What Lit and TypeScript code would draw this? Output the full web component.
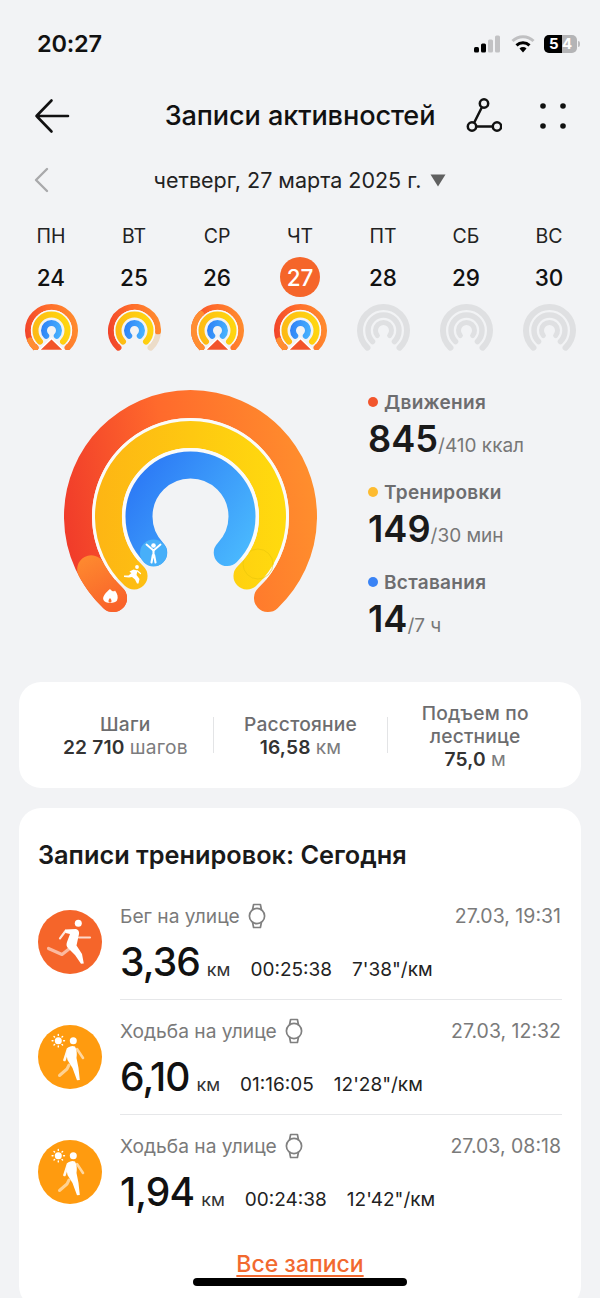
import { LitElement, html, css, svg } from "lit";
import { customElement, property } from "lit/decorators.js";

const pt = (cx: number, cy: number, r: number, a: number) => {
  // a: degrees clockwise from straight down
  const t = (a * Math.PI) / 180;
  return [cx - r * Math.sin(t), cy + r * Math.cos(t)];
};
const arc = (cx: number, cy: number, r: number, a0: number, a1: number) => {
  const [x0, y0] = pt(cx, cy, r, a0);
  const [x1, y1] = pt(cx, cy, r, a1);
  const large = a1 - a0 > 180 ? 1 : 0;
  return `M${x0.toFixed(2)} ${y0.toFixed(2)}A${r} ${r} 0 ${large} 1 ${x1.toFixed(2)} ${y1.toFixed(2)}`;
};

type Day = { w: string; n: string; kind: string };
const days: Day[] = [
  { w: "ПН", n: "24", kind: "a" },
  { w: "ВТ", n: "25", kind: "b" },
  { w: "СР", n: "26", kind: "c" },
  { w: "ЧТ", n: "27", kind: "d" },
  { w: "ПТ", n: "28", kind: "g" },
  { w: "СБ", n: "29", kind: "g" },
  { w: "ВС", n: "30", kind: "g" },
];

@customElement("mini-ring")
class MiniRing extends LitElement {
  @property() kind = "g";
  static styles = css`
    :host { display: block; width: 53px; height: 47px; }
    svg { display: block; }
  `;
  render() {
    const c = 26.5, A = 43, B = 317;
    if (this.kind === "g") {
      return html`<svg width="53" height="47" viewBox="0 0 53 47" fill="none" stroke="#dfe0e2" stroke-linecap="round">
        <path d=${arc(c, c, 23.5, A, B)} stroke-width="6" />
        <path d=${arc(c, c, 15.5, A + 2, B - 2)} stroke-width="5.5" />
        <path d=${arc(c, c, 8, 50, 310)} stroke-width="5" />
      </svg>`;
    }
    const k = this.kind;
    return html`<svg width="53" height="47" viewBox="0 0 53 47" fill="none" stroke-linecap="round">
      <defs>
        <linearGradient id="o" gradientUnits="userSpaceOnUse" x1="0" y1="30" x2="53" y2="20"><stop offset="0" stop-color="#f1432a"/><stop offset=".5" stop-color="#ff6c2c"/><stop offset="1" stop-color="#ff8c2e"/></linearGradient>
        <linearGradient id="y" gradientUnits="userSpaceOnUse" x1="6" y1="30" x2="47" y2="20"><stop offset="0" stop-color="#fdb714"/><stop offset="1" stop-color="#ffd90f"/></linearGradient>
        <linearGradient id="b" gradientUnits="userSpaceOnUse" x1="14" y1="24" x2="40" y2="30"><stop offset="0" stop-color="#2b7cf6"/><stop offset="1" stop-color="#4dbcff"/></linearGradient>
      </defs>
      ${k === "b"
        ? svg`<path d=${arc(c, c, 23.5, 270, B)} stroke="#ecdcc8" stroke-width="6"/>`
        : ""}
      <path d=${arc(c, c, 23.5, A, k === "b" ? 272 : B)} stroke="url(#o)" stroke-width="6" />
      ${k === "c" || k === "d" || k === "a"
        ? svg`<path d=${arc(c, c, 23.5, A, k === "c" ? 135 : 65)} stroke="#ff8d31" stroke-width="6"/>`
        : ""}
      <path d=${arc(c, c, 20.2, 48, 312)} stroke="#fdfdfd" stroke-width="1" stroke-linecap="butt"/>
      <path d=${arc(c, c, 16, A + 3, B - 3)} stroke="url(#y)" stroke-width="6" />
      <path d=${arc(c, c, 7.5, 45, 315)} stroke="url(#b)" stroke-width="6" />
      ${k !== "b"
        ? svg`<path d="M26.5 34.5L39 46.5H14Z" fill="#f2542b" stroke="#fff" stroke-width="1.5" stroke-linejoin="miter"/>
        <rect x="9" y="46" width="36" height="2" fill="#f2f3f5" stroke="none"/>`
        : ""}
    </svg>`;
  }
}

const runner = (c = "#fff") => svg`
  <circle cx="40.3" cy="13.3" r="3.5" fill="${c}"/>
  <path d="M27 19.5L38 19Q41.5 20 41 24L38.5 35.5L44 44L45.8 53.5L43 53.8L37 45L30.5 38.5Q27.5 36 29 32L32 24L27.5 23Z" fill="${c}"/>
  <path d="M27.5 21L22 28.3" stroke="${c}" stroke-width="2.2" stroke-linecap="round" opacity=".85" fill="none"/>
  <path d="M41 27.5H52" stroke="${c}" stroke-width="2.2" stroke-linecap="round" opacity=".75" fill="none"/>
  <path d="M31 39L24 44.5L10.5 38.5" fill="none" stroke="${c}" stroke-width="3.2" stroke-linecap="round" stroke-linejoin="round" opacity=".55"/>
`;

const walker = (c = "#fff") => svg`
  <circle cx="35.3" cy="15.7" r="3.5" fill="${c}"/>
  <path d="M30 22.5Q33.5 20 37 21.5Q39.5 26 38.5 33L40.5 43L41.8 55L39 55.3L34.5 43L29.5 35Q28 28 30 22.5Z" fill="${c}"/>
  <path d="M30 24L26.5 35" stroke="${c}" stroke-width="2.6" stroke-linecap="round" opacity=".95"/>
  <path d="M39 24L45 33" stroke="${c}" stroke-width="2.6" stroke-linecap="round" opacity=".6"/>
  <path d="M31 40L29 44L21.5 50.5" fill="none" stroke="${c}" stroke-width="3" stroke-linecap="round" stroke-linejoin="round" opacity=".55"/>
  <circle cx="20.3" cy="15.7" r="3.5" fill="${c}"/>
  <path d="M20.3 9.5V10.4M20.3 21V21.9M14.1 15.7H15M25.6 15.7H26.5M16 11.4L16.6 12M24 19.4L24.6 20M16 20L16.6 19.4M24 12L24.6 11.4" stroke="${c}" stroke-width="1.4" stroke-linecap="round"/>
`;

const watch = svg`<svg width="18" height="26" viewBox="0 0 18 26" fill="none" stroke="#808080" stroke-width="1.7" stroke-linejoin="round">
  <circle cx="9" cy="13" r="7.6"/>
  <path d="M4.5 7L5.6 1.5H12.4L13.5 7M4.5 19L5.6 24.5H12.4L13.5 19"/>
</svg>`;

const workouts = [
  { t: "Бег на улице", d: "27.03, 19:31", dist: "3,36", time: "00:25:38", pace: "7'38\"/км", run: true },
  { t: "Ходьба на улице", d: "27.03, 12:32", dist: "6,10", time: "01:16:05", pace: "12'28\"/км", run: false },
  { t: "Ходьба на улице", d: "27.03, 08:18", dist: "1,94", time: "00:24:38", pace: "12'42\"/км", run: false },
];

const stats = [
  { l: "Движения", c: "#f2552c", v: "845", u: "/410 ккал" },
  { l: "Тренировки", c: "#fdbb30", v: "149", u: "/30 мин" },
  { l: "Вставания", c: "#3a83f5", v: "14", u: "/7 ч" },
];

@customElement("app-root")
class AppRoot extends LitElement {
  static styles = css`
    :host {
      display: block; width: 600px; height: 1298px; overflow: hidden; position: relative;
      background: #f2f3f5; color: #111;
      font-family: Inter, "Noto Sans", sans-serif;
    }
    svg { display: block; }
    .status { height: 88px; display: flex; align-items: center; justify-content: space-between; padding: 0 20px 0 37px; }
    .time { font-size: 23.5px; font-weight: 600; letter-spacing: -0.2px; padding-bottom: 2px; }
    .sys { display: flex; align-items: center; gap: 9px; }
    .bwrap { display: flex; align-items: center; gap: 1px; }
    .batt { width: 33px; height: 18px; border-radius: 5px; display: flex; overflow: hidden; font-size: 15px; font-weight: 700; color: #fff; line-height: 18px; background: #b4b4b6; }
    .batt b { width: 18px; background: #000; padding-left: 5px; box-sizing: border-box; font-weight: 700; }
    .batt i { font-style: normal; }
    .nub { width: 2px; height: 6px; border-radius: 0 2px 2px 0; background: #bdbdbf; }
    .nav { height: 56px; display: grid; grid-template-columns: 1fr auto 1fr; align-items: center; padding: 0 34px; }
    .title { font-size: 27.1px; font-weight: 500; letter-spacing: -0.1px; white-space: nowrap; padding-bottom: 2px; }
    .nav-r { display: flex; justify-content: flex-end; align-items: center; gap: 38px; }
    .date { height: 72px; display: grid; grid-template-columns: 1fr auto 1fr; align-items: center; padding: 0 34px; }
    .date-m { display: flex; align-items: center; gap: 9px; font-size: 21.5px; color: #222; white-space: nowrap; }
    .week { display: grid; grid-template-columns: repeat(7, 83px); padding-left: 9.5px; }
    .day { display: flex; flex-direction: column; align-items: center; }
    .dw { height: 40px; line-height: 40px; font-size: 19.5px; color: #222; }
    .dn { width: 40px; height: 40px; margin: 1px 0 7px; border-radius: 50%; display: flex; align-items: center; justify-content: center; font-size: 22.5px; font-weight: 500; }
    .dn.on { background: #f5652a; color: #fff; }
    .rings { display: flex; padding: 29px 0 0 50px; height: 302px; gap: 38px; }
    .stats { display: flex; flex-direction: column; padding-top: 10px; }
    .stat { height: 90px; }
    .sl { display: flex; align-items: center; gap: 6px; height: 24px; font-size: 19px; font-weight: 600; color: #6d6d6f; letter-spacing: 0.3px; }
    .sd { width: 10px; height: 10px; border-radius: 50%; }
    .sv { display: flex; align-items: baseline; margin-top: 3px; line-height: 44px; }
    .sv b { font-size: 36.2px; font-weight: 600; color: #1a1a1a; }
    .sv span { font-size: 19px; color: #777; }
    .card { background: #fff; border-radius: 22px; margin: 0 19px; }
    .metrics { height: 106px; display: grid; grid-template-columns: repeat(3, 1fr); padding: 0 19px; align-items: center; }
    .m { text-align: center; font-size: 19.2px; font-weight: 500; color: #6d6d6f; line-height: 23px; letter-spacing: 0.2px; padding-top: 2px; box-sizing: border-box; }
    .m + .m { border-left: 1px solid #e3e4e6; }
    .m.c { height: 36px; display: flex; flex-direction: column; justify-content: center; }
    .m strong { display: block; color: #333; font-weight: 600; }
    .m small { font-size: 19.2px; font-weight: 400; color: #7c7c7e; }
    .records { margin-top: 20px; height: 500px; padding: 0 19px; }
    .rt { height: 77px; display: flex; align-items: flex-end; padding-bottom: 15px; box-sizing: border-box; font-size: 25.3px; font-weight: 600; color: #1a1a1a; white-space: nowrap; }
    .row { height: 115px; display: grid; grid-template-columns: 82px 1fr; }
    .ic { width: 64px; height: 64px; border-radius: 50%; margin-top: 25px; }
    .ic.r { background: #f5652a; }
    .ic.w { background: #ff9b0f; }
    .rc { border-bottom: 1px solid #e6e7e9; height: 115px; box-sizing: border-box; }
    .row:last-of-type .rc { border-bottom: 0; }
    .l1 { display: flex; align-items: center; justify-content: space-between; height: 26px; margin-top: 18px; font-size: 19.2px; color: #7a7a7a; padding-right: 1px; }
    .l1 div { display: flex; align-items: center; gap: 8px; }
    .l1 span { font-size: 19.5px; }
    .l2 { display: flex; align-items: baseline; margin-top: 9px; gap: 20px; font-size: 19px; color: #222; white-space: nowrap; }
    .l2 .dist { font-size: 39px; font-weight: 500; color: #111; letter-spacing: -0.9px; }
    .l2 .km { font-size: 18px; color: #333; margin-left: 7px; }
    .l2 > div { display: flex; align-items: baseline; }
    .all { display: block; text-align: center; margin-top: 20px; line-height: 28px; font-size: 23px; font-weight: 500; color: #f2692f; text-decoration: underline; text-underline-offset: 3px; }
    .home { position: absolute; left: 193px; top: 1278px; width: 214px; height: 8px; border-radius: 4px; background: #000; }
  `;

  private mainRing() {
    const cx = 140.5, cy = 136.5;
    return html`<svg width="280" height="240" viewBox="0 0 280 240" fill="none" stroke-linecap="round">
      <defs>
        <linearGradient id="ro" gradientUnits="userSpaceOnUse" x1="14" y1="170" x2="267" y2="130"><stop offset="0" stop-color="#f03a2a"/><stop offset=".45" stop-color="#ff6a2c"/><stop offset="1" stop-color="#ff8e2d"/></linearGradient>
        <linearGradient id="ry" gradientUnits="userSpaceOnUse" x1="45" y1="150" x2="237" y2="150"><stop offset="0" stop-color="#fdb514"/><stop offset="1" stop-color="#ffdb0e"/></linearGradient>
        <linearGradient id="rb" gradientUnits="userSpaceOnUse" x1="75" y1="100" x2="205" y2="190"><stop offset="0" stop-color="#2b77f5"/><stop offset="1" stop-color="#4dc0ff"/></linearGradient>
        <linearGradient id="tip" gradientUnits="userSpaceOnUse" x1="40" y1="165" x2="70" y2="225"><stop offset="0" stop-color="#ff8f30"/><stop offset="1" stop-color="#f9632a"/></linearGradient>
      </defs>
      <path d=${arc(cx, cy, 112.5, 43.5, 316.5)} stroke="url(#ro)" stroke-width="28"/>
      <path d=${arc(cx, cy, 112.5, 43.5, 62)} stroke="url(#tip)" stroke-width="28"/>
      <path d=${arc(cx, cy, 97, 50, 310)} stroke="#fbfbf9" stroke-width="3" stroke-linecap="butt"/>
      <path d=${arc(cx, cy, 82, 43.5, 316.5)} stroke="url(#ry)" stroke-width="27"/>
      <circle cx="208" cy="184" r="15" fill="none" stroke="#e8c40c" stroke-width="1" opacity=".6"/>
      <path d=${arc(cx, cy, 66.8, 50, 310)} stroke="#fbfbf9" stroke-width="3.5" stroke-linecap="butt"/>
      <path d=${arc(cx, cy, 51.5, 45.5, 314.5)} stroke="url(#rb)" stroke-width="27"/>
      <circle cx="103.5" cy="173" r="13.5" fill="#47aff9"/>
      <g fill="none" stroke="#fff" stroke-linecap="round" stroke-linejoin="round">
        <circle cx="103.5" cy="165.5" r="2.3" fill="#fff" stroke="none"/>
        <path d="M96.5 164.5L103.5 170.5L110.5 164.5" stroke-width="1.9"/>
        <path d="M103.5 170V175M101.5 182.5L102.9 175H104.1L105.5 182.5" stroke-width="2.1"/>
      </g>
      <g fill="#fff">
        <circle cx="87" cy="187" r="1.9"/>
        <path d="M79.5 191.5L83.5 189.5L87.5 190.5L86.5 195L89.5 199L88.5 203.5L87 203.5L85 199.5L82 197L79 197.5L74 197L74 195.5L78.5 195.5L81.5 193L80.5 192.5Z"/>
        <path d="M87.5 191L90.5 193.5" stroke="#fff" stroke-width="1.2" stroke-linecap="round"/>
      </g>
      <path d="M60 209C62 211.5 64 212 65 210.5C67.5 214 68.5 217 67 220.5C65.5 223.5 55 224 53.5 220C52 216.5 56 212.5 60 209Z" fill="#fff"/>
      <path d="M60 218C61.5 219.5 62 221 61 222.5H59C58 221 58.5 219.5 60 218Z" fill="#fa6d2b"/>
    </svg>`;
  }

  render() {
    return html`
      <div class="status">
        <span class="time">20:27</span>
        <div class="sys">
          <svg width="28" height="18" viewBox="0 0 28 18"><rect x="0" y="12" width="5" height="5.5" rx="1.5" fill="#000"/><rect x="7" y="8.5" width="5" height="9" rx="1.5" fill="#000"/><rect x="14" y="4.5" width="5" height="13" rx="1.5" fill="#c2c2c4"/><rect x="21" y="0.5" width="5" height="17" rx="1.5" fill="#c2c2c4"/></svg>
          <svg width="24" height="18" viewBox="0 0 24 18" fill="none" stroke-linecap="butt"><path d="M1.5 6A15 15 0 0 1 22.5 6" stroke="#c0c0c2" stroke-width="3"/><path d="M5.5 10.3A9.5 9.5 0 0 1 18.5 10.3" stroke="#000" stroke-width="3"/><path d="M12 17.5L8.5 13.5A5 5 0 0 1 15.5 13.5Z" fill="#000"/></svg>
          <div class="bwrap"><div class="batt"><b>5</b><i>4</i></div><span class="nub"></span></div>
        </div>
      </div>

      <div class="nav">
        <svg width="36" height="36" viewBox="0 0 36 36" fill="none" stroke="#111" stroke-width="2.6" stroke-linecap="round" stroke-linejoin="round"><path d="M17.5 2.5L2.5 18L17.5 33.5M2.5 18H34"/></svg>
        <span class="title">Записи активностей</span>
        <div class="nav-r">
          <svg width="40" height="36" viewBox="0 0 40 36" fill="none" stroke="#111" stroke-width="2.5"><circle cx="22" cy="5.5" r="4.2"/><circle cx="10" cy="28.5" r="4.2"/><circle cx="35" cy="28.5" r="4.2"/><path d="M20 9L12 25M14.2 28.5H30.800"/></svg>
          <svg width="26" height="26" viewBox="0 0 26 26" fill="#111"><circle cx="3" cy="3" r="2.8"/><circle cx="23" cy="3" r="2.8"/><circle cx="3" cy="23" r="2.8"/><circle cx="23" cy="23" r="2.8"/></svg>
        </div>
      </div>

      <div class="date">
        <svg width="16" height="26" viewBox="0 0 16 26" fill="none" stroke="#a9a9ab" stroke-width="2.4" stroke-linecap="round" stroke-linejoin="round"><path d="M13 2L2 13L13 24"/></svg>
        <div class="date-m">четверг, 27 марта 2025 г.
          <svg width="16" height="13" viewBox="0 0 16 13" fill="#606060"><path d="M0.5 0.5H15.5L8 12.5Z"/></svg>
        </div>
      </div>

      <div class="week">
        ${days.map(
          (d) => html`<div class="day">
            <div class="dw">${d.w}</div>
            <div class="dn ${d.n === "27" ? "on" : ""}">${d.n}</div>
            <mini-ring kind=${d.kind}></mini-ring>
          </div>`
        )}
      </div>

      <div class="rings">
        ${this.mainRing()}
        <div class="stats">
          ${stats.map(
            (s) => html`<div class="stat">
              <div class="sl"><span class="sd" style="background:${s.c}"></span>${s.l}</div>
              <div class="sv"><b>${s.v}</b><span>${s.u}</span></div>
            </div>`
          )}
        </div>
      </div>

      <div class="card metrics">
        <div class="m c">Шаги<strong>22 710 <small>шагов</small></strong></div>
        <div class="m c">Расстояние<strong>16,58 <small>км</small></strong></div>
        <div class="m c">Подъем по<br />лестнице<strong>75,0 <small>м</small></strong></div>
      </div>

      <div class="card records">
        <div class="rt">Записи тренировок: Сегодня</div>
        ${workouts.map(
          (w) => html`<div class="row">
            <div class="ic ${w.run ? "r" : "w"}"><svg width="64" height="64" viewBox="0 0 64 64">${w.run ? runner() : walker()}</svg></div>
            <div class="rc">
              <div class="l1"><div>${w.t} ${watch}</div><span>${w.d}</span></div>
              <div class="l2">
                <div><span class="dist">${w.dist}</span><span class="km">км</span></div>
                <span>${w.time}</span>
                <span>${w.pace}</span>
              </div>
            </div>
          </div>`
        )}
        <a class="all">Все записи</a>
      </div>
      <div class="home"></div>
    `;
  }
}
